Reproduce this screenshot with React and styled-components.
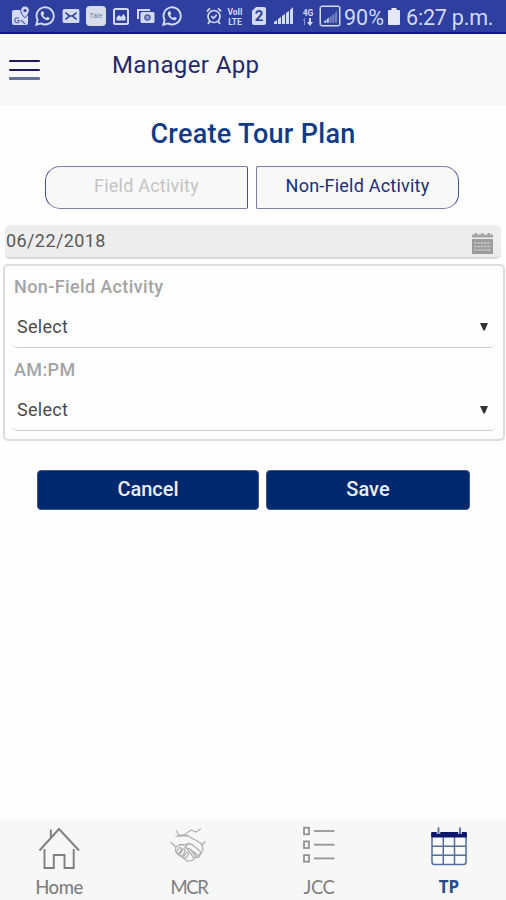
import React, { useState } from 'react';
import styled, { createGlobalStyle } from 'styled-components';

const GlobalStyle = createGlobalStyle`
  * {
    box-sizing: border-box;
  }

  body {
    margin: 0;
    background: #fefefe;
    font-family: Roboto, 'Liberation Sans', sans-serif;
  }
`;

// Layout
const Screen = styled.div`
  display: flex;
  flex-direction: column;
  height: 900px;
  width: 506px;
  overflow: hidden;
`;

const StatusBar = styled.div`
  display: flex;
  align-items: center;
  height: 34px;
  flex: none;
  background: #2f3f9f;
  border-bottom: 2px solid #14148f;
  color: #d3daf6;
`;

const StatusItem = styled.div`
  display: flex;
  flex: none;
  width: ${props => props.$width}px;
  margin-left: ${props => props.$gap}px;

  svg {
    display: block;
  }
`;

const StatusText = styled(StatusItem)`
  font-size: 21.5px;
  line-height: 30px;
  white-space: nowrap;
  letter-spacing: ${props => props.$spacing || 0}px;
  padding-top: 3px;
`;

const TinyText = styled(StatusItem)`
  flex-direction: column;
  align-items: center;
  font-size: 8.5px;
  font-weight: 700;
  line-height: 10px;
  padding-top: 1px;
`;

const Header = styled.header`
  display: flex;
  flex: none;
  height: 72px;
  padding: 24px 0 0 9px;
  background: #f8f8f8;
`;

const MenuButton = styled.button`
  display: flex;
  flex-direction: column;
  justify-content: space-between;
  width: 31px;
  height: 20px;
  margin: 2px 0 0;
  padding: 0;
  border: 0;
  background: none;
`;

const MenuLine = styled.span`
  display: block;
  width: 31px;
  height: ${props => (props.$soft ? 3 : 2)}px;
  border-radius: 1px;
  background: ${props => (props.$soft ? '#65709a' : '#1c1a5c')};
`;

const AppName = styled.div`
  margin: -7px 0 0 72px;
  font-size: 24px;
  line-height: 29px;
  letter-spacing: 0.38px;
  color: #25296b;
`;

const Content = styled.main`
  flex: 1;
`;

const Title = styled.h1`
  margin: 12px 0 16px;
  font-size: 27px;
  font-weight: 500;
  line-height: 32px;
  letter-spacing: 0.3px;
  text-align: center;
  color: #123a85;
`;

const Tabs = styled.div`
  display: flex;
  gap: 8px;
  padding-left: 45px;
`;

const Tab = styled.button`
  width: 203px;
  height: 43px;
  padding: 0 0 5px;
  border: 1.5px solid #7880a9;
  border-${props => props.$side}-color: #3f5190;
  border-radius: ${props => (props.$side === 'left' ? '15px 2px 2px 15px' : '2px 15px 15px 2px')};
  border-right-color: #3f5190;
  background: #f8f8f8;
  font: 400 18px Roboto, sans-serif;
  letter-spacing: 0.22px;
  color: ${props => (props.$active ? '#222d78' : '#c3c3c3')};
`;

const DateField = styled.div`
  display: flex;
  justify-content: space-between;
  height: 34px;
  margin: 16px 5px 0;
  padding: 4px 8px 0 1px;
  border-bottom: 2px solid #d9d9d9;
  border-radius: 5px;
  background: #ededed;
  font-size: 18px;
  line-height: 23px;
  letter-spacing: 0.4px;
  color: #5a5a5a;

  svg {
    margin-top: 3px;
  }
`;

const Panel = styled.section`
  height: 177px;
  margin: 5px 1px 0 3px;
  padding: 0 8px 0 7px;
  border: 2px solid #dcdcdc;
  border-radius: 5px;
`;

const Group = styled.div`
  height: 83px;
`;

const Label = styled.div`
  height: 41px;
  padding: 10px 0 0 2px;
  font-size: 18px;
  font-weight: 500;
  line-height: 21px;
  letter-spacing: 0.38px;
  color: #a4a4a4;
`;

const Select = styled.div`
  display: flex;
  justify-content: space-between;
  align-items: center;
  height: 41px;
  padding: 0 7px 2px 5px;
  border-bottom: 1.5px solid #cfcfcf;
  border-radius: 5px;
  font-size: 18px;
  letter-spacing: 0.3px;
  color: #4a4a4a;
`;

const Actions = styled.div`
  display: flex;
  gap: 7px;
  padding: 29px 0 0 37px;
`;

const ActionButton = styled.button`
  width: ${props => props.$width}px;
  height: 40px;
  padding: 0 0 2px;
  border: 1px solid #465487;
  border-radius: 4px;
  background: #00286f;
  font: 500 20px Roboto, sans-serif;
  color: #e8edfa;
`;

const BottomNav = styled.nav`
  display: flex;
  justify-content: space-between;
  flex: none;
  height: 80px;
  padding: 0 17px 0 19px;
  background: #f7f7f7;
`;

const NavItem = styled.div`
  display: flex;
  flex-direction: column;
  align-items: center;
  width: 80px;
  padding-top: 6px;
  font-family: ${props => (props.$active ? "'Noto Sans'" : 'Lato')}, sans-serif;
  font-size: ${props => (props.$active ? 17 : 18.5)}px;
  font-weight: ${props => props.$weight};
  line-height: 24px;
  letter-spacing: ${props => props.$spacing}px;
  color: ${props => (props.$active ? '#2a4a8c' : '#7f7f7f')};

  svg {
    margin-bottom: 4px;
  }
`;

// Status bar icons
const MapsIcon = () => (
  <svg width="18" height="20" viewBox="0 0 18 20">
    <path d="M2 4h7l3 7 4-3v9q0 2-2 2H2q-2 0-2-2V6q0-2 2-2Z" fill="currentColor" />
    <path d="M13 0a4.3 4.3 0 0 0-4.3 4.3C8.700 7.500 13 12 13 12s4.300-4.500 4.300-7.700A4.300 4.300 0 0 0 13 0Z" fill="currentColor" stroke="#2f3f9f" strokeWidth="1" />
    <circle cx="13" cy="4.500" r="1.600" fill="#2f3f9f" />
    <path d="M7 12.500A2.500 2.500 0 1 0 7 16v-1.500H5M9 14l4 4" fill="none" stroke="#5562ac" strokeWidth="1.200" />
  </svg>
);

const WhatsAppIcon = () => (
  <svg width="20" height="20" viewBox="0 0 20 20">
    <path d="M1.300 18.700 2.600 14A8.600 8.600 0 1 1 6 17.400Z" fill="none" stroke="currentColor" strokeWidth="1.900" />
    <path d="M7 5.300c-2 1.200-1.500 4 .8 6.400s5 3.500 6.600 1.500c.5-.9.2-1.200-.4-1.600l-1.500-.8-1.300 1.300c-1.400-.5-2.400-1.500-3-3l1.100-1.300-.8-2c-.3-.7-.8-.8-1.500-.5Z" fill="currentColor" />
  </svg>
);

const MailIcon = () => (
  <svg width="18" height="14" viewBox="0 0 18 15">
    <rect width="18" height="15" rx="2" fill="currentColor" />
    <path d="m3 4 4.500 3.500L3 11M15 4l-4.500 3.500L15 11M7 7.500h4" fill="none" stroke="#2f3f9f" strokeWidth="1.700" />
  </svg>
);

const TaleBadge = styled.div`
  width: 20px;
  height: 20px;
  border-radius: 4px;
  background: #d9dcea;
  font-size: 7px;
  line-height: 20px;
  text-align: center;
  color: #767ba8;
`;

const ImageIcon = () => (
  <svg width="16" height="17" viewBox="0 0 16 17">
    <rect x="1" y="1" width="14" height="15" rx="1.500" fill="none" stroke="currentColor" strokeWidth="2" />
    <path d="m3.500 12.500 0-3L6 7l2 2 2.500-3 2 3v3.500Z" fill="currentColor" />
  </svg>
);

const PhotosIcon = () => (
  <svg width="18" height="16" viewBox="0 0 18 16">
    <path d="M1 11V2h12" fill="none" stroke="currentColor" strokeWidth="2" />
    <rect x="3.500" y="4" width="14" height="11" rx="1.500" fill="currentColor" />
    <circle cx="10.500" cy="9.500" r="3.300" fill="#5663b0" />
    <circle cx="10.500" cy="9.500" r="1.400" fill="#a5aedc" />
  </svg>
);

const AlarmIcon = () => (
  <svg width="16" height="18" viewBox="0 0 16 18" fill="none" stroke="currentColor" strokeWidth="1.700">
    <circle cx="8" cy="9.500" r="6" />
    <path d="M.8 4.300 4 1.300M15.200 4.300 12 1.300M3.800 14 2 17M12.200 14l1.800 3M5.300 9.200l2.200 2.100 3.200-3.400" />
  </svg>
);

const SimBadge = styled.div`
  width: 14px;
  height: 18px;
  border-radius: 2px;
  clip-path: polygon(4px 0, 100% 0, 100% 100%, 0 100%, 0 4px);
  background: currentColor;
  font-size: 15px;
  font-weight: 700;
  line-height: 18px;
  text-align: center;

  span {
    color: #2f3f9f;
  }
`;

const SignalIcon = ({ faded, size }) => (
  <svg width={size} height={size * 0.9} viewBox="0 0 19 17" fill="currentColor">
    <path d="M0 17v-2l3-2v4ZM4 17v-5l3-2v7Z" />
    <path d="M8 17V9l3-2v10ZM12 17V6l3-2v13ZM16 17V3l3-3v17Z" opacity={faded ? 0.45 : 1} />
  </svg>
);

const SignalBox = styled.div`
  display: flex;
  align-items: flex-end;
  justify-content: center;
  width: 20px;
  height: 20px;
  padding-bottom: 2px;
  border: 1.5px solid currentColor;
  border-radius: 2px;
  box-shadow: 0 0 0 0.5px currentColor;
`;

const DataArrows = () => (
  <svg width="12" height="8" viewBox="0 0 12 8">
    <path d="M3 0v7H2V3H1l1.500-3Z" fill="#8d98d3" />
    <path d="M7 0h2v4h2L8 8 5 4h2Z" fill="currentColor" />
  </svg>
);

const BatteryIcon = () => (
  <svg width="12" height="17" viewBox="0 0 12 17">
    <path d="M3.500 0h5v2H11q1 0 1 1v13q0 1-1 1H1q-1 0-1-1V3q0-1 1-1h2.500Z" fill="#e6e9f5" />
  </svg>
);

// Content icons
const SmallCalendar = () => (
  <svg width="21" height="22" viewBox="0 0 21 22">
    <path d="M0 2.500h2.500V1H5v1.500h4V1h2.500v1.500h4V1H18v1.500h3v3H0Z" fill="#a5a5a5" />
    <rect y="7" width="21" height="15" fill="#9c9c9c" />
    <path d="M2 11h17M2 14.500h17M2 18h17" stroke="#cdcdcd" strokeWidth="1.700" strokeDasharray="2.300 1" />
  </svg>
);

const Caret = () => (
  <svg width="8" height="9" viewBox="0 0 8 9">
    <path d="M0 1h8L4.800 8.500H3.500Z" fill="#333" />
  </svg>
);

const HomeIcon = () => (
  <svg width="42" height="45" viewBox="0 0 42 45" fill="none" stroke="#7f7f7f" strokeWidth="1.900">
    <path d="M1.500 24.500 21 3l20 21.500M12.800 11.500V3.500M6.500 23v19h9.300V29h10.700v13h9.200V23" />
  </svg>
);

const HandshakeIcon = () => (
  <svg width="42" height="45" viewBox="0 0 42 45" fill="none" stroke="#b0b0b0" strokeWidth="1.300" strokeLinecap="round" strokeLinejoin="round">
    <path d="m8.500 5 2.500 4.500 5-.5 7-5 5 2 4.500-3M8 10.500l3-1" />
    <path d="m10.500 10 9-.5 3 2 9.500 5 2.500 3M37 15.500l-3 3.500 1 5-3 5" />
    <path d="m3 16.500 5 4.500-.5 4 3 4 3.500 2 6 4.500 5-1.500 2-2.500 4-.5 1-3.500M8 21l4-2.500 5 .5 3-1.500 4 1 8 6.500 1 2.500" />
    <path d="m20 17.500-3 4 5 1.500 9 7M22 23l7 8.500M19 23l7 9" />
    <path d="m11 22-2.500 4q.5 3 3 1l2-4Q13 20.500 11 22Zm4 1-3 5.500q.5 2.500 3 1l2-4.500q0-3-2-2Zm3 4-2.500 4q.5 2 3 .5l2-3.500q-.5-2-2.500-1Z" />
  </svg>
);

const ListIcon = () => (
  <svg width="32" height="45" viewBox="0 0 32 45" fill="none" stroke="#8f8f8f">
    {[5, 18.7, 32.4].map(y => (
      <g key={y} strokeWidth="1.700">
        <rect x="1" y={y - 3.3} width="5" height="6.600" />
        <path d={`M11 ${y}h20.500`} strokeWidth="1.900" stroke="#999" />
      </g>
    ))}
  </svg>
);

const PlanIcon = () => (
  <svg width="36" height="45" viewBox="0 0 36 45" fill="none" stroke="#536d9f" strokeWidth="1.500">
    <path d="M1 7v29q0 2.500 2.500 2.500h29q2.500 0 2.500-2.500V7" fill="#fafbfe" />
    <path d="M1 20.300h34M1 29.300h34M12.300 10v28M23.500 10v28" />
    <path d="M.7 6.500h34.600V11H.7Z" fill="#0c176c" stroke="#0c176c" strokeWidth="1" />
    <path d="M7.500 1.500V8M29 1.500V8" stroke="#f5f5fa" strokeWidth="3.500" />
    <path d="M7.500 1.500V8M29 1.500V8" strokeWidth="1.800" />
  </svg>
);

const navItems = [
  { name: 'Home', icon: <HomeIcon />, weight: 500, spacing: -0.5 },
  { name: 'MCR', icon: <HandshakeIcon />, weight: 400, spacing: -1.3 },
  { name: 'JCC', icon: <ListIcon />, weight: 400, spacing: -0.5 },
  { name: 'TP', icon: <PlanIcon />, weight: 700, spacing: 0, active: true },
];

const App = () => {
  const [activity, setActivity] = useState('Non-Field Activity');

  return (
    <Screen>
      <GlobalStyle />
      <StatusBar>
        <StatusItem $width={18} $gap={12}><MapsIcon /></StatusItem>
        <StatusItem $width={20} $gap={5}><WhatsAppIcon /></StatusItem>
        <StatusItem $width={18} $gap={7}><MailIcon /></StatusItem>
        <StatusItem $width={20} $gap={6}><TaleBadge>Tale</TaleBadge></StatusItem>
        <StatusItem $width={16} $gap={7}><ImageIcon /></StatusItem>
        <StatusItem $width={18} $gap={8}><PhotosIcon /></StatusItem>
        <StatusItem $width={20} $gap={7}><WhatsAppIcon /></StatusItem>
        <StatusItem $width={16} $gap={24}><AlarmIcon /></StatusItem>
        <TinyText $width={18} $gap={4}>
          <span>VoII</span>
          <span>LTE</span>
        </TinyText>
        <StatusItem $width={14} $gap={8}><SimBadge><span>2</span></SimBadge></StatusItem>
        <StatusItem $width={19} $gap={8}><SignalIcon size={19} /></StatusItem>
        <TinyText $width={14} $gap={8}>
          <span>4G</span>
          <DataArrows />
        </TinyText>
        <StatusItem $width={20} $gap={5}>
          <SignalBox><SignalIcon size={13} faded /></SignalBox>
        </StatusItem>
        <StatusText $width={40} $gap={4} $spacing={0}>90%</StatusText>
        <StatusItem $width={12} $gap={4}><BatteryIcon /></StatusItem>
        <StatusText $width={92} $gap={6} $spacing={-0.2}>6:27 p.m.</StatusText>
      </StatusBar>

      <Header>
        <MenuButton aria-label="Menu">
          <MenuLine />
          <MenuLine />
          <MenuLine $soft />
        </MenuButton>
        <AppName>Manager App</AppName>
      </Header>

      <Content>
        <Title>Create Tour Plan</Title>
        <Tabs>
          {['Field Activity', 'Non-Field Activity'].map((name, i) => (
            <Tab
              key={name}
              $side={i === 0 ? 'left' : 'right'}
              $active={activity === name}
              onClick={() => setActivity(name)}
            >
              {name}
            </Tab>
          ))}
        </Tabs>
        <DateField>
          06/22/2018
          <SmallCalendar />
        </DateField>
        <Panel>
          {['Non-Field Activity', 'AM:PM'].map(name => (
            <Group key={name}>
              <Label>{name}</Label>
              <Select>
                Select
                <Caret />
              </Select>
            </Group>
          ))}
        </Panel>
        <Actions>
          <ActionButton $width={222}>Cancel</ActionButton>
          <ActionButton $width={204}>Save</ActionButton>
        </Actions>
      </Content>

      <BottomNav>
        {navItems.map(item => (
          <NavItem
            key={item.name}
            $active={item.active}
            $weight={item.weight}
            $spacing={item.spacing}
          >
            {item.icon}
            {item.name}
          </NavItem>
        ))}
      </BottomNav>
    </Screen>
  );
};

export default App;
